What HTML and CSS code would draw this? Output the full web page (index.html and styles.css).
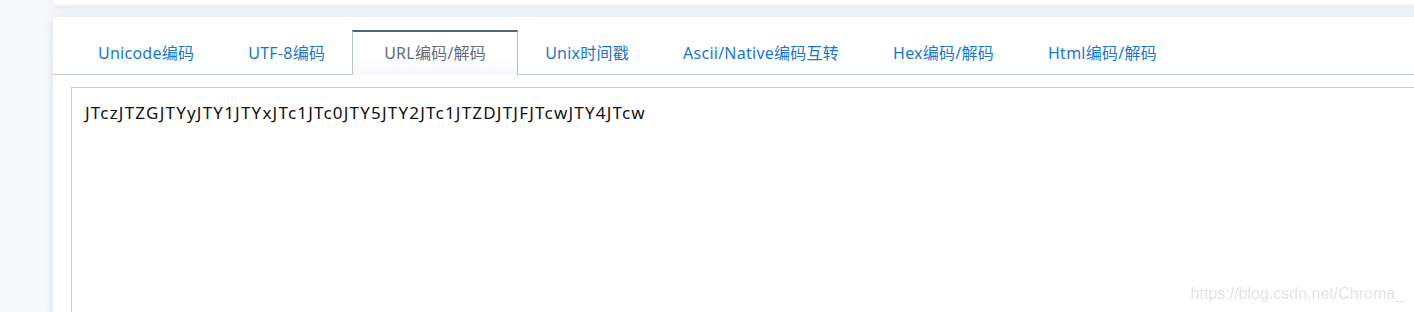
FILE: index.html
```html
<!DOCTYPE html>
<html>

<head>
    <title>编码转换工具</title>
    <link rel="stylesheet" href="styles.css">
</head>

<body>
    <div class="main">
        <div class="card top-card"></div>

        <div class="card tool-card">
            <ul class="tabs">
                <li class="tab">Unicode编码</li>
                <li class="tab">UTF-8编码</li>
                <li class="tab active">URL编码/解码</li>
                <li class="tab">Unix时间戳</li>
                <li class="tab">Ascii/Native编码互转</li>
                <li class="tab">Hex编码/解码</li>
                <li class="tab">Html编码/解码</li>
            </ul>
            <div class="panel">
                <textarea class="result" spellcheck="false">JTczJTZGJTYyJTY1JTYxJTc1JTc0JTY5JTY2JTc1JTZDJTJFJTcwJTY4JTcw</textarea>
            </div>
        </div>
    </div>

    <div class="watermark">https://blog.csdn.net/Chroma_</div>
</body>

</html>
```

FILE: styles.css
```css
body {
    font-family: "Noto Sans", "Noto Sans CJK SC", sans-serif;
    margin: 0;
    padding: 0;
    background-color: #f6f8fb;
    height: 312px;
    overflow: hidden;
}

.main {
    padding-left: 53px;
}

.card {
    background-color: #ffffff;
    width: 1420px;
    box-shadow: 0 2px 10px rgba(170, 190, 220, 0.45);
}

.top-card {
    height: 5px;
    border-radius: 0 0 4px 4px;
}

.tool-card {
    margin-top: 12px;
    height: 300px;
    border-radius: 4px 4px 0 0;
}

.tabs {
    list-style: none;
    margin: 0;
    padding: 13px 0 0 18px;
    display: flex;
    border-bottom: 1px solid #c3ccdb;
}

.tab {
    height: 42px;
    line-height: 42px;
    padding: 0 26px;
    margin-bottom: -1px;
    border: 1px solid transparent;
    border-top-width: 2px;
    border-bottom: none;
    color: #1a78c8;
    font-size: 16px;
    letter-spacing: 0.25px;
    cursor: pointer;
}

.tab.active {
    color: #666d78;
    background: linear-gradient(#ffffff 60%, #f4f8fc);
    border-color: #b7c2d4;
    border-top-color: #56647e;
    padding: 0 31px;
    height: 43px;
}

.panel {
    padding: 12px 0 0 18px;
}

.result {
    display: block;
    width: 1400px;
    height: 240px;
    margin: 0;
    padding: 13px 13px;
    border: 1px solid #c4ccd7;
    border-radius: 0;
    font-family: "Noto Sans", "Noto Sans CJK SC", sans-serif;
    font-size: 17px;
    letter-spacing: 1.2px;
    color: #111111;
    resize: none;
    outline: none;
    box-sizing: border-box;
}

.watermark {
    position: fixed;
    right: 10px;
    bottom: 9px;
    color: #e4e4e4;
    font-family: "Liberation Sans", Arial, sans-serif;
    font-size: 16px;
}
```
